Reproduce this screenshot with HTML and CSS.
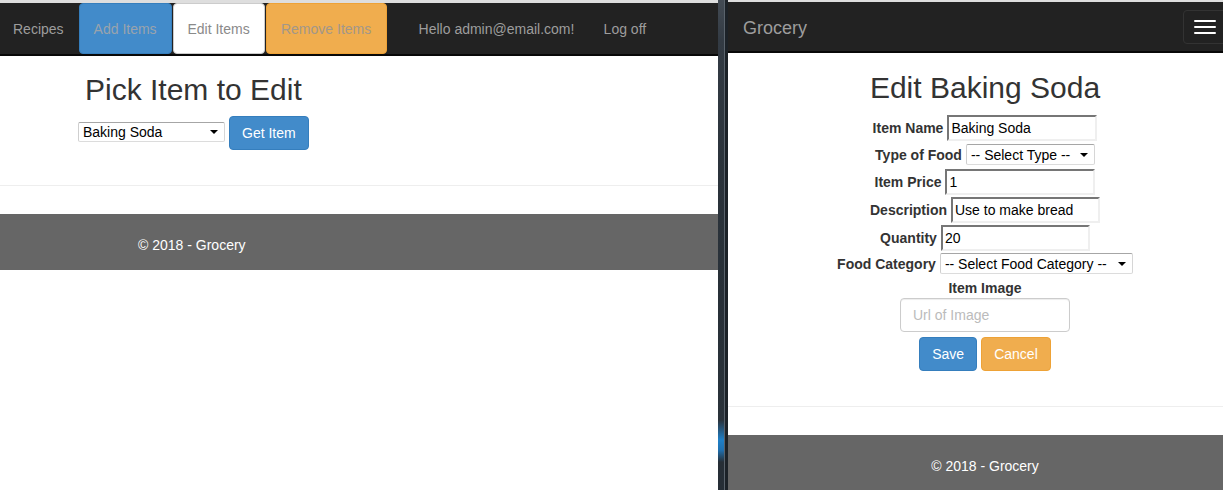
FILE: index.html
```html
<!DOCTYPE html>
<html lang="en">
<head>
<meta charset="utf-8">
<title>Grocery</title>
<link rel="stylesheet" href="styles.css">
</head>
<body>
<div class="screen">
  <div class="win win-left">
    <div class="topstrip"></div>
    <nav class="navbar nav-left">
      <a class="nav-link">Recipes</a>
      <a class="nav-btn nav-blue">Add Items</a>
      <a class="nav-btn nav-white">Edit Items</a>
      <a class="nav-btn nav-orange">Remove Items</a>
      <a class="nav-link nav-hello">Hello admin@email.com!</a>
      <a class="nav-link nav-logoff">Log off</a>
    </nav>
    <main class="content-left">
      <h2 class="title title-left">Pick Item to Edit</h2>
      <div class="pick-row">
        <span class="select-wrap"><select class="sel sel-pick"><option>Baking Soda</option></select></span>
        <button class="btn btn-primary">Get Item</button>
      </div>
    </main>
    <hr class="rule">
    <footer class="footer footer-left">© 2018 - Grocery</footer>
  </div>
  <div class="divider"></div>
  <div class="win win-right">
    <div class="win-inner">
      <div class="topstrip topstrip-right"></div>
      <nav class="navbar nav-right">
        <a class="brand">Grocery</a>
        <button class="toggle" aria-label="Toggle navigation">
          <span class="bar"></span><span class="bar"></span><span class="bar"></span>
        </button>
      </nav>
      <main class="content-right">
        <h2 class="title title-right">Edit Baking Soda</h2>
        <form class="edit-form">
          <div class="row r1"><label>Item Name</label><input class="txt" type="text" value="Baking Soda"></div>
          <div class="row r2"><label>Type of Food</label><span class="select-wrap"><select class="sel sel-type"><option>-- Select Type --</option></select></span></div>
          <div class="row r3"><label>Item Price</label><input class="txt" type="text" value="1"></div>
          <div class="row r4"><label>Description</label><input class="txt txt-desc" type="text" value="Use to make bread"></div>
          <div class="row r5"><label>Quantity</label><input class="txt txt-qty" type="text" value="20"></div>
          <div class="row r6"><label>Food Category</label><span class="select-wrap"><select class="sel sel-cat"><option>-- Select Food Category --</option></select></span></div>
          <div class="row r7"><label>Item Image</label></div>
          <div class="row r8"><input class="form-control" type="text" placeholder="Url of Image"></div>
          <div class="row r9"><button type="button" class="btn btn-primary">Save</button><button type="button" class="btn btn-warning">Cancel</button></div>
        </form>
      </main>
      <hr class="rule rule-right">
      <footer class="footer footer-right">© 2018 - Grocery</footer>
    </div>
  </div>
</div>
</body>
</html>
```

FILE: styles.css
```css
* { box-sizing: border-box; }
html, body { margin: 0; padding: 0; }
body {
  width: 1223px;
  height: 490px;
  overflow: hidden;
  background: #fff;
  font-family: "Liberation Sans", Arial, sans-serif;
  font-size: 14px;
  color: #333;
}
.screen { display: flex; width: 1223px; height: 490px; }

.win { height: 490px; background: #fff; overflow: hidden; }
.win-left { width: 718px; flex: none; }
.win-right { width: 495px; flex: none; }
.win-inner { width: 514px; }

.topstrip { height: 3px; background: #dedede; }
.topstrip-right { height: 2px; }

.navbar {
  background: #222;
  border-bottom: 2px solid #080808;
  display: flex;
  align-items: stretch;
}
.nav-left { height: 53px; }
.nav-right { height: 51px; align-items: flex-start; justify-content: space-between; }

.nav-link {
  color: #9d9d9d;
  display: flex;
  align-items: center;
  padding: 0 15px;
  font-size: 14px;
  white-space: nowrap;
}
.nav-left .nav-link:first-child { padding-left: 13px; }
.nav-hello { margin-left: 17px; width: 185px; }
.nav-logoff { padding-left: 15px; }

.nav-btn {
  display: flex;
  align-items: center;
  justify-content: center;
  height: 51px;
  border: 1px solid transparent;
  border-radius: 4px;
  color: #999;
  font-size: 14px;
  white-space: nowrap;
}
.nav-blue { width: 93px; background: #428bca; border-color: #357ebd; color: #9aa3ad; }
.nav-white { width: 92px; background: #fff; border-color: #ccc; color: #8a8a8a; margin-left: 1px; }
.nav-orange { width: 121px; background: #f0ad4e; border-color: #eea236; color: #a2978a; margin-left: 1px; }

.brand {
  color: #9d9d9d;
  font-size: 18px;
  line-height: 20px;
  padding: 16px 15px 13px;
}
.toggle {
  width: 44px;
  height: 34px;
  margin: 8px 15px 0 0;
  padding: 9px 10px;
  background: transparent;
  border: 1px solid #333;
  border-radius: 4px;
  display: flex;
  flex-direction: column;
  gap: 4px;
}
.bar { display: block; width: 22px; height: 2px; background: #fff; border-radius: 1px; }

.title {
  font-family: "Liberation Sans", Arial, sans-serif;
  font-size: 30px;
  font-weight: 500;
  line-height: 33px;
  color: #333;
  margin: 0;
}
.content-left { padding: 17px 0 0 78px; }
.title-left { padding-left: 7px; margin-bottom: 10px; }
.pick-row { display: flex; align-items: flex-start; gap: 4px; }
.pick-row .select-wrap { margin-top: 6px; }

.select-wrap { position: relative; display: inline-block; }
.select-wrap::after {
  content: "";
  position: absolute;
  right: 7px;
  top: 50%;
  margin-top: -2px;
  border-left: 4px solid transparent;
  border-right: 4px solid transparent;
  border-top: 4px solid #000;
  pointer-events: none;
}
.sel {
  -webkit-appearance: none;
  appearance: none;
  display: block;
  height: 20px;
  padding: 0 18px 0 4px;
  border: 1px solid #a9a9a9;
  border-color: #a6a6a6 #d6d6d6 #dcdcdc #cfcfcf;
  border-radius: 2px;
  background: #fff;
  font-family: "Liberation Sans", Arial, sans-serif;
  font-size: 14px;
  color: #000;
}
.sel-pick { width: 147px; }
.sel-type { width: 129px; height: 21px; }
.sel-cat { width: 193px; height: 21px; }

.btn {
  display: inline-block;
  padding: 6px 12px;
  font-family: "Liberation Sans", Arial, sans-serif;
  font-size: 14px;
  line-height: 20px;
  border: 1px solid transparent;
  border-radius: 4px;
  color: #fff;
  cursor: pointer;
}
.btn-primary { background: #428bca; border-color: #357ebd; }
.btn-warning { background: #f0ad4e; border-color: #eea236; }

.rule { border: 0; border-top: 1px solid #eee; margin: 0; }
.content-left + .rule { margin-top: 35px; }
.rule-right { margin-top: 35px; }

.footer {
  background: #666;
  color: #fff;
  font-size: 14px;
  height: 56px;
  margin-top: 28px;
  padding-top: 23px;
  line-height: 16px;
}
.footer-left { padding-left: 138px; }
.footer-right { text-align: center; }

.content-right { padding-top: 18px; }
.title-right { text-align: center; margin-bottom: 11px; }
.edit-form { display: flex; flex-direction: column; align-items: center; }
.row { display: flex; align-items: center; justify-content: center; gap: 4px; }
.row label { font-weight: bold; font-size: 14px; color: #333; }
.r1 { height: 26px; }
.r2 { height: 27px; }
.r3 { height: 28px; }
.r4 { height: 28px; }
.r5 { height: 27px; }
.r6 { height: 25px; }
.r7 { height: 20px; margin-top: 2px; }
.r8 { height: 34px; }
.r9 { margin-top: 5px; }

.txt {
  width: 150px;
  height: 26px;
  padding: 1px 2px;
  border-style: solid;
  border-width: 2px;
  border-color: #767676 #efefef #efefef #767676;
  background: #fff;
  font-family: "Liberation Sans", Arial, sans-serif;
  font-size: 14px;
  color: #000;
}
.txt-desc { width: 149px; }
.txt-qty { width: 149px; }

.form-control {
  width: 170px;
  height: 34px;
  padding: 6px 12px;
  border: 1px solid #ccc;
  border-radius: 4px;
  box-shadow: inset 0 1px 1px rgba(0,0,0,.075);
  font-family: "Liberation Sans", Arial, sans-serif;
  font-size: 14px;
  color: #555;
}
.form-control::placeholder { color: #bbb; }

.divider {
  width: 10px;
  flex: none;
  height: 490px;
  background:
    linear-gradient(to right, rgba(0,0,0,0) 0 6px, #5a636c 6px 7px, #1c2228 7px 10px),
    linear-gradient(to bottom, #434b54 0, #333b44 40px, #2b333b 170px, #283038 300px, #2a323a 420px, #1f80c8 440px, #1f70b0 450px, #262e36 462px, #262e36 490px);
}
```
